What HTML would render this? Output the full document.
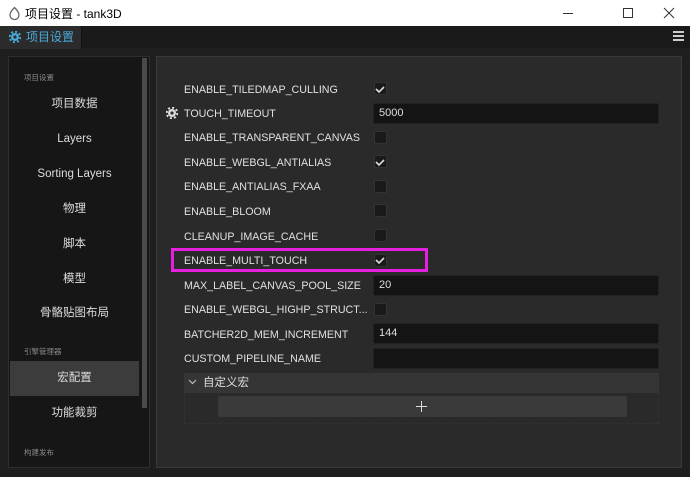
<!DOCTYPE html>
<html><head><meta charset="utf-8"><style>
*{margin:0;padding:0;box-sizing:border-box}
body{width:690px;height:476px;overflow:hidden;background:#1e1e1e;font-family:"Liberation Sans","Noto Sans CJK SC",sans-serif;position:relative}
.a{position:absolute}
.title{left:0;top:0;width:690px;height:26px;background:#fff;color:#000;font-size:12px}
.tabbar{left:0;top:26px;width:690px;height:22px;background:#1a1a1a}
.tab{left:0;top:26px;width:82px;height:23px;background:#2b2b2b;color:#4aa8d8;font-size:12px;line-height:22px;padding-left:26px;border-right:1px solid #111}
.lp{left:8px;top:56px;width:142px;height:412px;background:#161616;border:1px solid #2e2e2e}
.rp{left:156px;top:56px;width:526px;height:412px;background:#2a2a2a;border:1px solid #3a3a3a}
.li{left:10px;width:129px;text-align:center;color:#ddd;font-size:11.5px;line-height:37px;height:35px}
.sec{left:24px;color:#888;font-size:7.5px}
.lb{left:184px;color:#e0e0e0;font-size:10.7px;line-height:14px;top:1px}
.cb{left:374px;width:13px;height:13px;background:#1a1a1a;border:1px solid #333;border-radius:2px}
.in{left:373px;width:286px;height:21px;background:#141414;border:1px solid #222;border-radius:2px;color:#ddd;font-size:11px;line-height:19px;padding-left:5px}
</style></head><body>
<div class="a title"><svg class="a" style="left:8px;top:6px" width="13" height="14"><path d="M6.5 1.5 C3 5,2 7.5,2 9 A4.5 4.5 0 0 0 11 9 C11 7.5,10 5,6.5 1.5Z" fill="none" stroke="#666" stroke-width="1.3"/></svg><span class="a" style="left:25px;top:5px">项目设置 - tank3D</span>
<div class="a" style="left:563px;top:13px;width:10px;height:1px;background:#333"></div>
<div class="a" style="left:623px;top:8px;width:10px;height:10px;border:1px solid #333"></div>
<svg class="a" style="left:663px;top:7px" width="12" height="12"><path d="M1 1L11 11M11 1L1 11" stroke="#333" stroke-width="1"/></svg></div>
<div class="a tabbar"></div>
<div class="a tab"><svg class="a" style="left:9px;top:5px" width="12" height="12"><circle cx="6" cy="6" r="4" fill="#4aa8d8"/><circle cx="6" cy="6" r="5.3" fill="none" stroke="#4aa8d8" stroke-width="2" stroke-dasharray="2 2.15"/><circle cx="6" cy="6" r="1.6" fill="#2b2b2b"/></svg>项目设置</div>
<div class="a" style="left:673px;top:31px;width:11px;height:2px;background:#ccc;box-shadow:0 4px 0 #ccc,0 8px 0 #ccc"></div>
<div class="a lp"></div>
<div class="a" style="left:142px;top:58px;width:5px;height:350px;background:#4a4a4a"></div>
<div class="a sec" style="top:72px">项目设置</div>
<div class="a li" style="top:86px">项目数据</div>
<div class="a li" style="top:121px">Layers</div>
<div class="a li" style="top:156px">Sorting Layers</div>
<div class="a li" style="top:191px">物理</div>
<div class="a li" style="top:226px">脚本</div>
<div class="a li" style="top:261px">模型</div>
<div class="a li" style="top:295px">骨骼贴图布局</div>
<div class="a sec" style="top:346px">引擎管理器</div>
<div class="a li" style="top:361px;background:#3c3c3c;line-height:35px">宏配置</div>
<div class="a li" style="top:395px">功能裁剪</div>
<div class="a sec" style="top:447px">构建发布</div>
<div class="a rp"></div>
<div style="position:absolute;left:0;top:1px;width:690px;height:476px">
<div class="a lb" style="top:82px">ENABLE_TILEDMAP_CULLING</div>
<div class="a lb" style="top:106px">TOUCH_TIMEOUT</div>
<div class="a lb" style="top:130px">ENABLE_TRANSPARENT_CANVAS</div>
<div class="a lb" style="top:155px">ENABLE_WEBGL_ANTIALIAS</div>
<div class="a lb" style="top:179px">ENABLE_ANTIALIAS_FXAA</div>
<div class="a lb" style="top:204px">ENABLE_BLOOM</div>
<div class="a lb" style="top:229px">CLEANUP_IMAGE_CACHE</div>
<div class="a lb" style="top:253px">ENABLE_MULTI_TOUCH</div>
<div class="a lb" style="top:278px">MAX_LABEL_CANVAS_POOL_SIZE</div>
<div class="a lb" style="top:302px">ENABLE_WEBGL_HIGHP_STRUCT...</div>
<div class="a lb" style="top:327px">BATCHER2D_MEM_INCREMENT</div>
<div class="a lb" style="top:351px">CUSTOM_PIPELINE_NAME</div>
</div>
<svg class="a" style="left:166px;top:107px" width="12" height="12"><circle cx="6" cy="6" r="4" fill="#ddd"/><circle cx="6" cy="6" r="5.3" fill="none" stroke="#ddd" stroke-width="2" stroke-dasharray="2 2.15"/><circle cx="6" cy="6" r="1.6" fill="#2a2a2a"/></svg>
<div class="a cb" style="top:82px"></div><div class="a in" style="top:103px">5000</div>
<div class="a cb" style="top:131px"></div><div class="a cb" style="top:155px"></div>
<div class="a cb" style="top:180px"></div><div class="a cb" style="top:204px"></div>
<div class="a cb" style="top:229px"></div><div class="a cb" style="top:254px"></div>
<div class="a in" style="top:275px">20</div><div class="a cb" style="top:303px"></div>
<div class="a in" style="top:323px">144</div><div class="a in" style="top:348px"></div>
<svg class="a" style="left:0;top:0" width="690" height="476"><g fill="none" stroke="#ddd" stroke-width="1.6"><path d="M376 89l3 3 5-5"/><path d="M376 162l3 3 5-5"/><path d="M376 260l3 3 5-5"/></g></svg>
<div class="a" style="left:171px;top:248px;width:257px;height:24px;border:3px solid #e61fe0"></div>
<div class="a" style="left:184px;top:373px;width:475px;height:20px;background:#353535;color:#ddd;font-size:11.5px;line-height:20px;padding-left:19px">自定义宏</div>
<svg class="a" style="left:188px;top:379px" width="9" height="6"><path d="M1 1l3.5 3.5L8 1" fill="none" stroke="#bbb" stroke-width="1.2"/></svg>
<div class="a" style="left:184px;top:393px;width:475px;height:31px;border:1px dashed #333;border-top:none"></div>
<div class="a" style="left:218px;top:396px;width:409px;height:21px;background:#3a3a3a;border-radius:2px"></div>
<div class="a" style="left:416px;top:406px;width:11px;height:1px;background:#ddd"></div>
<div class="a" style="left:421px;top:401px;width:1px;height:11px;background:#ddd"></div>
</body></html>
